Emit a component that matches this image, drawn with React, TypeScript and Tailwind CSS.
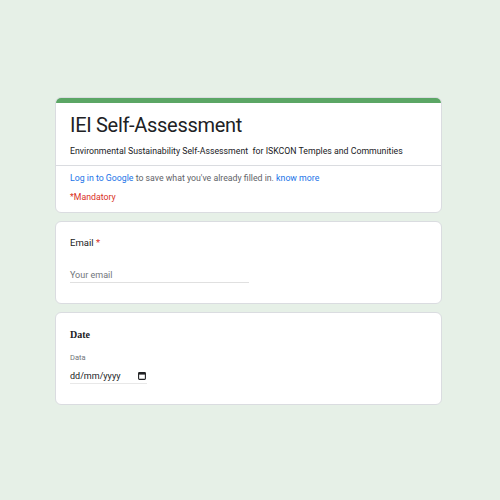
import React from 'react';

export default function App() {
  return (
    <div
      className="w-[500px] h-[500px] bg-[#e6f0e7] flex flex-col items-start pl-[55px] pt-[97px] gap-[8px]"
      style={{ fontFamily: 'Roboto, "Liberation Sans", sans-serif' }}
    >
      {/* header card */}
      <div className="w-[387px] bg-white rounded-[6px] border border-[#dadce0] overflow-hidden">
        <div className="h-[6px] bg-[#5ba665] -mx-px -mt-px" />
        <div className="px-[14px] pt-[9px] pb-[8px]">
          <h1 className="text-[20px] leading-[26px] tracking-[-0.3px] text-[#202124]">IEI Self-Assessment</h1>
          <p className="text-[8.75px] leading-[12px] text-[#202124] mt-[7px] whitespace-pre">
            Environmental Sustainability Self-Assessment  for ISKCON Temples and Communities
          </p>
        </div>
        <div className="h-px bg-[#dadce0]" />
        <div className="px-[14px] pt-[6px] pb-[9px]">
          <p className="text-[8.75px] leading-[12px] text-[#5f6368]">
            <span className="text-[#1a73e8]">Log in to Google</span> to save what you've already filled in.{' '}
            <span className="text-[#1a73e8]">know more</span>
          </p>
          <p className="text-[8.75px] leading-[12px] text-[#d93025] mt-[7px]">*Mandatory</p>
        </div>
      </div>

      {/* email card */}
      <div className="w-[387px] h-[83px] bg-white rounded-[6px] border border-[#dadce0] px-[14px] pt-[14px]">
        <p className="text-[9.5px] leading-[14px] text-[#202124]">
          Email <span className="text-[#d93025]">*</span>
        </p>
        <div className="mt-[19px] w-[179px] border-b border-[#e0e0e0] pb-[1px] text-[9px] leading-[12px] text-[#70757a]">
          Your email
        </div>
      </div>

      {/* date card */}
      <div className="w-[387px] h-[93px] bg-white rounded-[6px] border border-[#dadce0] px-[14px] pt-[15px]">
        <p
          className="text-[10px] leading-[14px] font-bold text-[#202124]"
          style={{ fontFamily: '"Liberation Serif", serif' }}
        >
          Date
        </p>
        <p className="text-[7.5px] leading-[10px] text-[#70757a] mt-[11px]">Data</p>
        <div className="mt-[7px] w-[77px] border-b border-[#e8e8e8] pb-[1px] flex items-center justify-between">
          <span className="text-[9px] leading-[12px] text-[#202124]">dd/mm/yyyy</span>
          <svg width="8" height="8" viewBox="0 0 8 8" className="mr-[1px]">
            <rect x="0.6" y="0.6" width="6.8" height="6.8" rx="0.8" fill="none" stroke="#202124" strokeWidth="1.1" />
            <rect x="0.6" y="0.6" width="6.8" height="2" fill="#202124" />
          </svg>
        </div>
      </div>
    </div>
  );
}
